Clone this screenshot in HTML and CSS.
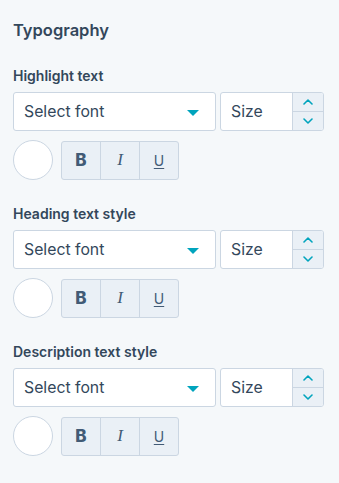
FILE: index.html
```html
<!DOCTYPE html>
<html>
<head>
<meta charset="utf-8">
<link rel="stylesheet" href="styles.css">
</head>
<body>
<div class="panel">
  <h2 class="title">Typography</h2>

  <div class="group">
    <div class="label">Highlight text</div>
    <div class="row">
      <div class="select"><span>Select font</span><span class="caret"></span></div>
      <div class="size"><span class="size-text">Size</span>
        <div class="stepper">
          <div class="step"><svg width="10" height="6" viewBox="0 0 10 6"><path d="M1 5 L5 1 L9 5" fill="none" stroke="#00a4bd" stroke-width="1.6" stroke-linecap="round" stroke-linejoin="round"/></svg></div>
          <div class="step"><svg width="10" height="6" viewBox="0 0 10 6"><path d="M1 1 L5 5 L9 1" fill="none" stroke="#00a4bd" stroke-width="1.6" stroke-linecap="round" stroke-linejoin="round"/></svg></div>
        </div>
      </div>
    </div>
    <div class="row2">
      <div class="swatch"></div>
      <div class="btns">
        <div class="btn b">B</div>
        <div class="btn i">I</div>
        <div class="btn u">U</div>
      </div>
    </div>
  </div>

  <div class="group">
    <div class="label">Heading text style</div>
    <div class="row">
      <div class="select"><span>Select font</span><span class="caret"></span></div>
      <div class="size"><span class="size-text">Size</span>
        <div class="stepper">
          <div class="step"><svg width="10" height="6" viewBox="0 0 10 6"><path d="M1 5 L5 1 L9 5" fill="none" stroke="#00a4bd" stroke-width="1.6" stroke-linecap="round" stroke-linejoin="round"/></svg></div>
          <div class="step"><svg width="10" height="6" viewBox="0 0 10 6"><path d="M1 1 L5 5 L9 1" fill="none" stroke="#00a4bd" stroke-width="1.6" stroke-linecap="round" stroke-linejoin="round"/></svg></div>
        </div>
      </div>
    </div>
    <div class="row2">
      <div class="swatch"></div>
      <div class="btns">
        <div class="btn b">B</div>
        <div class="btn i">I</div>
        <div class="btn u">U</div>
      </div>
    </div>
  </div>

  <div class="group">
    <div class="label">Description text style</div>
    <div class="row">
      <div class="select"><span>Select font</span><span class="caret"></span></div>
      <div class="size"><span class="size-text">Size</span>
        <div class="stepper">
          <div class="step"><svg width="10" height="6" viewBox="0 0 10 6"><path d="M1 5 L5 1 L9 5" fill="none" stroke="#00a4bd" stroke-width="1.6" stroke-linecap="round" stroke-linejoin="round"/></svg></div>
          <div class="step"><svg width="10" height="6" viewBox="0 0 10 6"><path d="M1 1 L5 5 L9 1" fill="none" stroke="#00a4bd" stroke-width="1.6" stroke-linecap="round" stroke-linejoin="round"/></svg></div>
        </div>
      </div>
    </div>
    <div class="row2">
      <div class="swatch"></div>
      <div class="btns">
        <div class="btn b">B</div>
        <div class="btn i">I</div>
        <div class="btn u">U</div>
      </div>
    </div>
  </div>
</div>
</body>
</html>
```
FILE: styles.css
```css
html, body {
  margin: 0;
  padding: 0;
  background: #f5f8fa;
  font-family: "Inter", "Open Sans", sans-serif;
  color: #33475b;
}
.panel {
  padding: 20px 15px 0 13px;
}
.title {
  margin: 0;
  font-size: 16.5px;
  line-height: 20px;
  font-weight: 600;
  color: #33475b;
}
.group {
  margin-top: 27px;
}
.group + .group {
  margin-top: 25px;
}
.label {
  font-size: 14px;
  line-height: 18px;
  font-weight: 600;
  margin-bottom: 7px;
}
.row {
  display: flex;
  gap: 4px;
  height: 39px;
}
.select {
  width: 203px;
  box-sizing: border-box;
  background: #fff;
  border: 1px solid #cbd6e2;
  border-radius: 3px;
  display: flex;
  align-items: center;
  justify-content: space-between;
  padding: 0 16px 0 10px;
  font-size: 15.8px;
}
.caret {
  width: 0;
  height: 0;
  border-left: 6px solid transparent;
  border-right: 6px solid transparent;
  border-top: 6px solid #00a4bd;
  margin-top: 2px;
}
.size {
  width: 104px;
  box-sizing: border-box;
  background: #fff;
  border: 1px solid #cbd6e2;
  border-radius: 3px;
  display: flex;
}
.size-text {
  flex: 1;
  display: flex;
  align-items: center;
  padding-left: 10px;
  font-size: 15.8px;
}
.stepper {
  width: 30px;
  border-left: 1px solid #cbd6e2;
  background: #eaf0f6;
  display: flex;
  flex-direction: column;
  border-radius: 0 2px 2px 0;
}
.step {
  flex: 1;
  display: flex;
  align-items: center;
  justify-content: center;
}
.step + .step {
  border-top: 1px solid #cbd6e2;
}
.row2 {
  display: flex;
  gap: 8px;
  margin-top: 9px;
  align-items: center;
}
.swatch {
  width: 38px;
  height: 38px;
  border-radius: 50%;
  background: #fff;
  border: 1px solid #cbd6e2;
}
.btns {
  display: flex;
  border: 1px solid #cbd6e2;
  border-radius: 3px;
  background: #eaf0f6;
  height: 37px;
}
.btn {
  width: 38px;
  display: flex;
  align-items: center;
  justify-content: center;
  color: #425b76;
  font-size: 15px;
}
.btn + .btn {
  border-left: 1px solid #cbd6e2;
}
.btn.b {
  font-weight: 800;
  font-size: 17px;
}
.btn.i {
  font-family: "Liberation Serif", serif;
  font-style: italic;
  font-size: 17px;
}
.btn.u {
  text-decoration: underline;
  text-underline-offset: 2px;
  font-size: 14px;
}
```
